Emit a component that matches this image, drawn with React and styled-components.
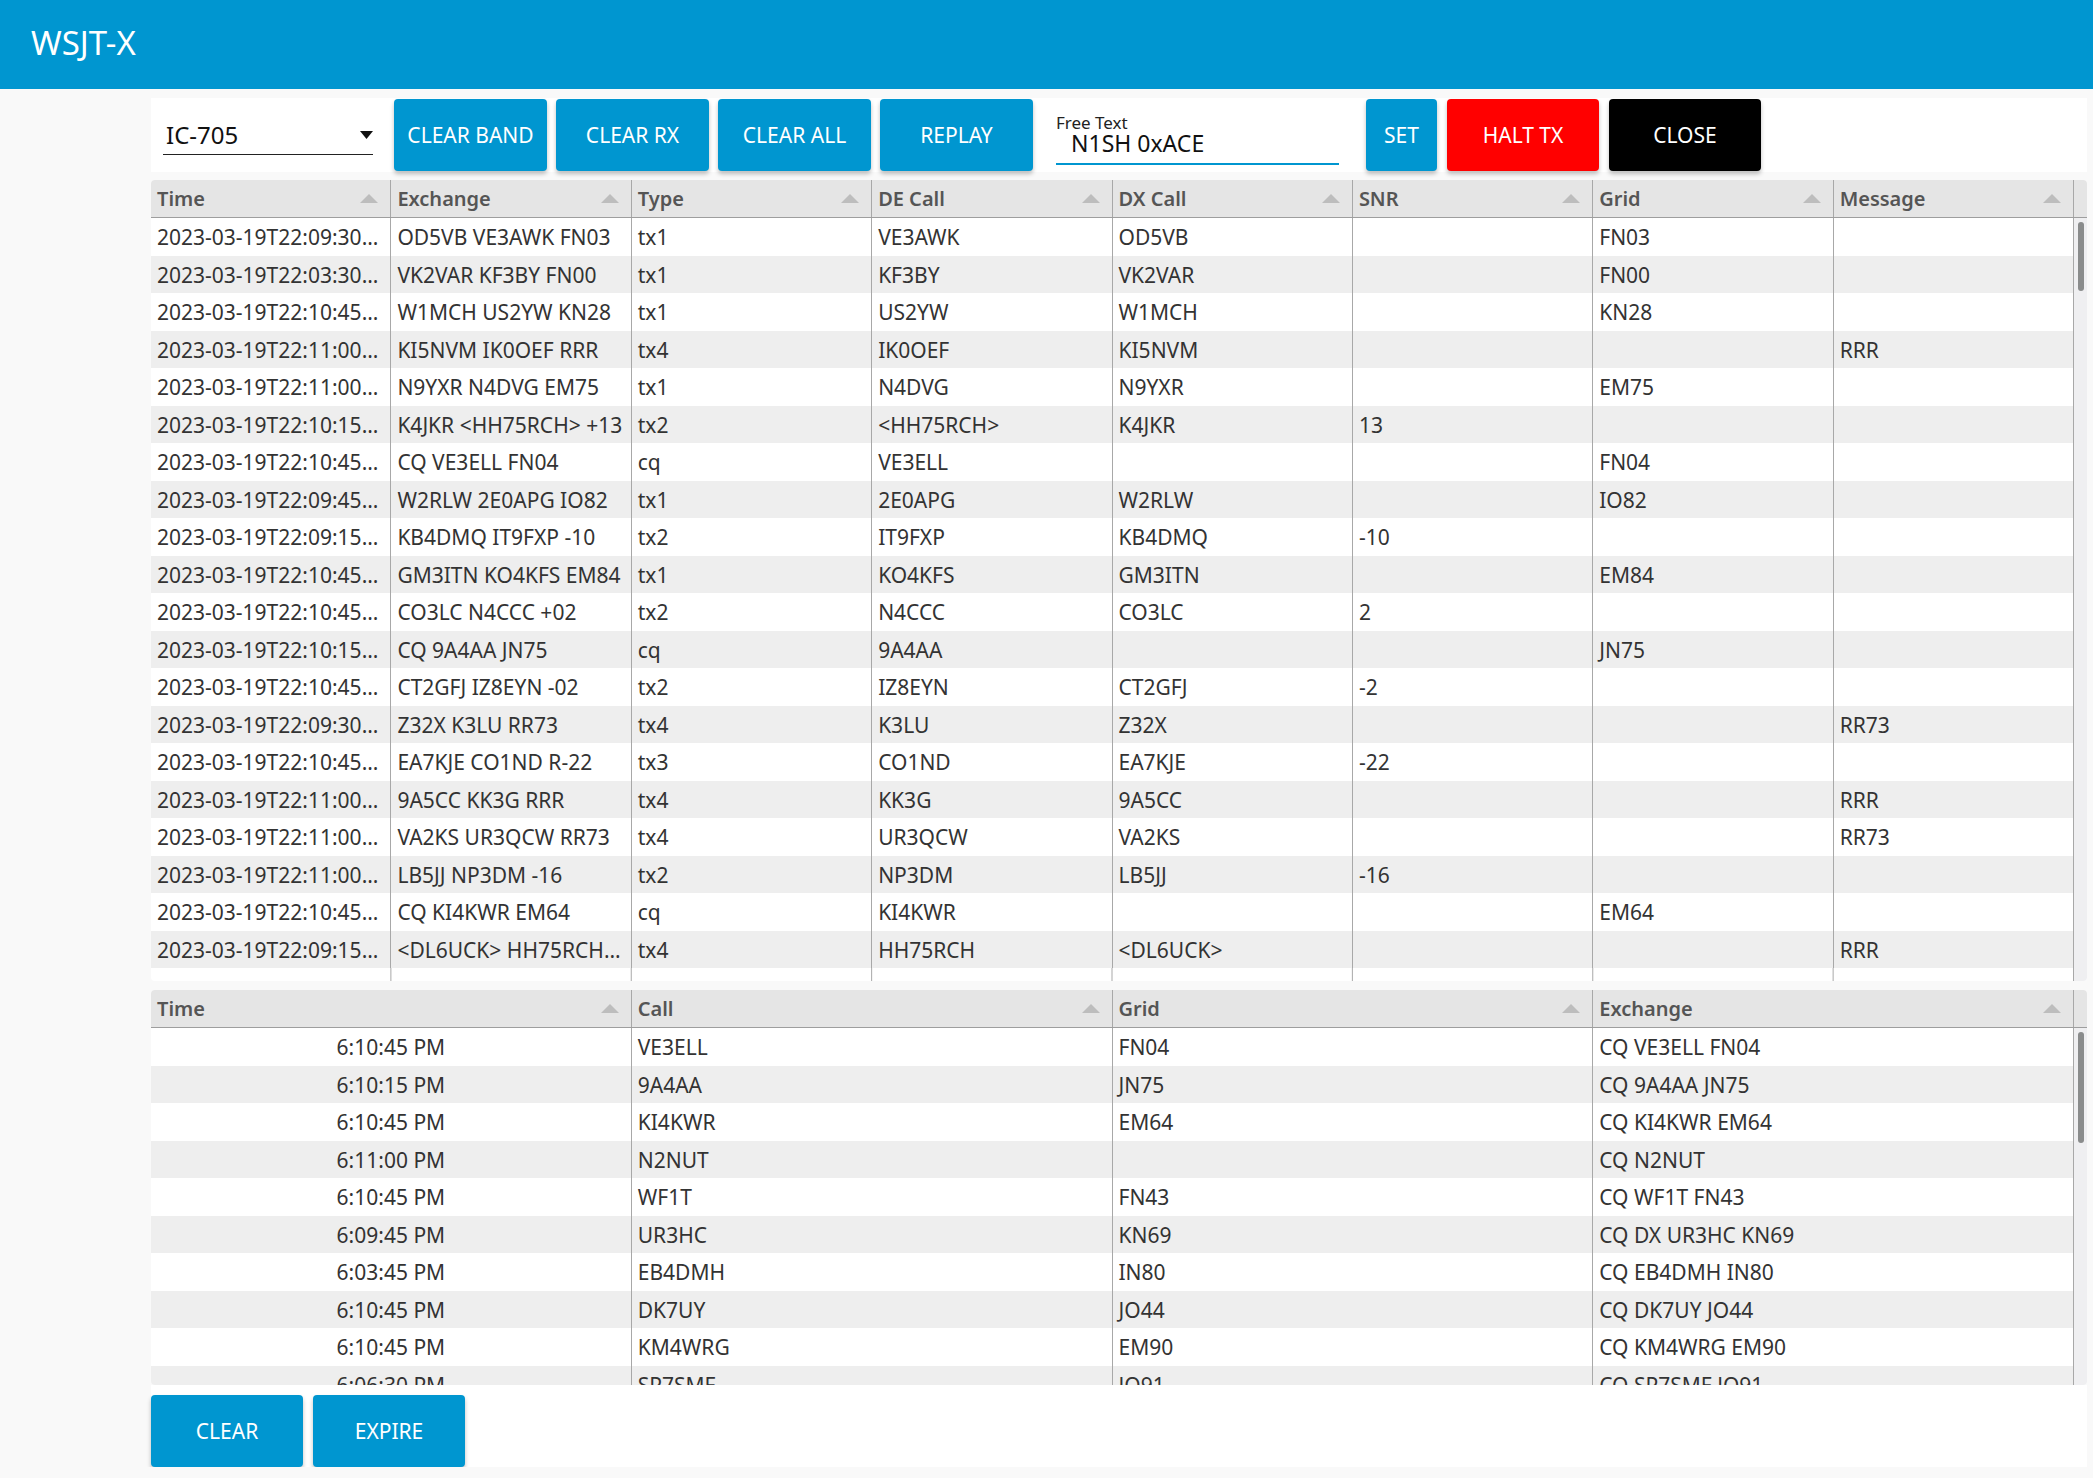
import styled, { createGlobalStyle } from "styled-components";

const GlobalStyle = createGlobalStyle`
  body {
    margin: 0;
    background: #f9f9f9;
    font-family: "Noto Sans", "DejaVu Sans", sans-serif;
    color: #333;
  }
`;

const topRows = [
  ["2023-03-19T22:09:30.000Z", "OD5VB VE3AWK FN03", "tx1", "VE3AWK", "OD5VB", "", "FN03", ""],
  ["2023-03-19T22:03:30.000Z", "VK2VAR KF3BY FN00", "tx1", "KF3BY", "VK2VAR", "", "FN00", ""],
  ["2023-03-19T22:10:45.000Z", "W1MCH US2YW KN28", "tx1", "US2YW", "W1MCH", "", "KN28", ""],
  ["2023-03-19T22:11:00.000Z", "KI5NVM IK0OEF RRR", "tx4", "IK0OEF", "KI5NVM", "", "", "RRR"],
  ["2023-03-19T22:11:00.000Z", "N9YXR N4DVG EM75", "tx1", "N4DVG", "N9YXR", "", "EM75", ""],
  ["2023-03-19T22:10:15.000Z", "K4JKR <HH75RCH> +13", "tx2", "<HH75RCH>", "K4JKR", "13", "", ""],
  ["2023-03-19T22:10:45.000Z", "CQ VE3ELL FN04", "cq", "VE3ELL", "", "", "FN04", ""],
  ["2023-03-19T22:09:45.000Z", "W2RLW 2E0APG IO82", "tx1", "2E0APG", "W2RLW", "", "IO82", ""],
  ["2023-03-19T22:09:15.000Z", "KB4DMQ IT9FXP -10", "tx2", "IT9FXP", "KB4DMQ", "-10", "", ""],
  ["2023-03-19T22:10:45.000Z", "GM3ITN KO4KFS EM84", "tx1", "KO4KFS", "GM3ITN", "", "EM84", ""],
  ["2023-03-19T22:10:45.000Z", "CO3LC N4CCC +02", "tx2", "N4CCC", "CO3LC", "2", "", ""],
  ["2023-03-19T22:10:15.000Z", "CQ 9A4AA JN75", "cq", "9A4AA", "", "", "JN75", ""],
  ["2023-03-19T22:10:45.000Z", "CT2GFJ IZ8EYN -02", "tx2", "IZ8EYN", "CT2GFJ", "-2", "", ""],
  ["2023-03-19T22:09:30.000Z", "Z32X K3LU RR73", "tx4", "K3LU", "Z32X", "", "", "RR73"],
  ["2023-03-19T22:10:45.000Z", "EA7KJE CO1ND R-22", "tx3", "CO1ND", "EA7KJE", "-22", "", ""],
  ["2023-03-19T22:11:00.000Z", "9A5CC KK3G RRR", "tx4", "KK3G", "9A5CC", "", "", "RRR"],
  ["2023-03-19T22:11:00.000Z", "VA2KS UR3QCW RR73", "tx4", "UR3QCW", "VA2KS", "", "", "RR73"],
  ["2023-03-19T22:11:00.000Z", "LB5JJ NP3DM -16", "tx2", "NP3DM", "LB5JJ", "-16", "", ""],
  ["2023-03-19T22:10:45.000Z", "CQ KI4KWR EM64", "cq", "KI4KWR", "", "", "EM64", ""],
  ["2023-03-19T22:09:15.000Z", "<DL6UCK> HH75RCH RRR", "tx4", "HH75RCH", "<DL6UCK>", "", "", "RRR"],
];

const bottomRows = [
  ["6:10:45 PM", "VE3ELL", "FN04", "CQ VE3ELL FN04"],
  ["6:10:15 PM", "9A4AA", "JN75", "CQ 9A4AA JN75"],
  ["6:10:45 PM", "KI4KWR", "EM64", "CQ KI4KWR EM64"],
  ["6:11:00 PM", "N2NUT", "", "CQ N2NUT"],
  ["6:10:45 PM", "WF1T", "FN43", "CQ WF1T FN43"],
  ["6:09:45 PM", "UR3HC", "KN69", "CQ DX UR3HC KN69"],
  ["6:03:45 PM", "EB4DMH", "IN80", "CQ EB4DMH IN80"],
  ["6:10:45 PM", "DK7UY", "JO44", "CQ DK7UY JO44"],
  ["6:10:45 PM", "KM4WRG", "EM90", "CQ KM4WRG EM90"],
  ["6:06:30 PM", "SP7SMF", "JO91", "CQ SP7SMF JO91"],
];

const topCols = ["Time", "Exchange", "Type", "DE Call", "DX Call", "SNR", "Grid", "Message"];
const bottomCols = ["Time", "Call", "Grid", "Exchange"];

function SortArrow() {
  return (
    <svg width="18" height="9" viewBox="0 0 18 9">
      <polygon points="0,9 9,0 18,9" fill="#bdbdbd" />
    </svg>
  );
}

// timestamp column: first cell either centred (short times) or trimmed (ISO stamps)
function DataTable({ cols, rows, height, thumb, firstCol, filler }) {
  return (
    <Table $h={height}>
      <HeadRow $n={cols.length}>
        {cols.map((c) => (
          <HeadCell key={c}>
            <span>{c}</span>
            <SortArrow />
          </HeadCell>
        ))}
        <HeadSpacer />
      </HeadRow>
      <Body>
        <Rows>
          {rows.map((r, i) => (
            <Row key={i} $n={cols.length}>
              {r.map((v, j) => (
                <Cell key={j} $variant={j === 0 ? firstCol : undefined}>
                  {v}
                </Cell>
              ))}
            </Row>
          ))}
          {filler && <Filler $n={cols.length} />}
        </Rows>
        <Track>
          <Thumb $h={thumb} />
        </Track>
      </Body>
    </Table>
  );
}

export default function App() {
  return (
    <>
      <GlobalStyle />
      <AppBar>WSJT-X</AppBar>
      <Main>
        <Toolbar>
          <Select>
            <span>IC-705</span>
            <svg width="13" height="8" viewBox="0 0 13 8">
              <polygon points="0,0 13,0 6.5,8" fill="#111" />
            </svg>
          </Select>
          <ButtonGroup $gap={9} $ml={21}>
            <Button $w={153}>CLEAR BAND</Button>
            <Button $w={153}>CLEAR RX</Button>
            <Button $w={153}>CLEAR ALL</Button>
            <Button $w={153}>REPLAY</Button>
          </ButtonGroup>
          <FreeText>
            <Label>Free Text</Label>
            <Value>N1SH 0xACE</Value>
          </FreeText>
          <ButtonGroup $gap={10} $ml={27}>
            <Button $w={71}>SET</Button>
            <Button $w={152} $bg="#ff0000">HALT TX</Button>
            <Button $w={152} $bg="#000000">CLOSE</Button>
          </ButtonGroup>
        </Toolbar>

        <Spacer $h={8} />
        <DataTable cols={topCols} rows={topRows} height={801} thumb={69} firstCol="stamp" filler />
        <Spacer $h={9} />
        <DataTable cols={bottomCols} rows={bottomRows} height={395} thumb={111} firstCol="center" />

        <Footer>
          <ButtonGroup $gap={10} $ml={0}>
            <Button $w={152}>CLEAR</Button>
            <Button $w={152}>EXPIRE</Button>
          </ButtonGroup>
        </Footer>
      </Main>
    </>
  );
}

const AppBar = styled.header`
  height: 89px;
  box-sizing: border-box;
  background: #0096d0;
  color: #fff;
  display: flex;
  align-items: center;
  padding: 0 0 5px 31px;
  font-size: 33px;
`;

const Main = styled.main`
  margin: 9px 6px 0 151px;
  display: flex;
  flex-direction: column;
`;

const Toolbar = styled.div`
  height: 74px;
  background: #fff;
  display: flex;
  align-items: center;
  padding-left: 12px;
`;

const Select = styled.div`
  width: 210px;
  height: 40px;
  box-sizing: border-box;
  border-bottom: 1px solid #222;
  display: flex;
  align-items: center;
  justify-content: space-between;
  padding-left: 3px;
  font-size: 24px;
  color: #111;
`;

const ButtonGroup = styled.div`
  display: flex;
  gap: ${(p) => p.$gap}px;
  margin-left: ${(p) => p.$ml}px;
`;

const Button = styled.button`
  width: ${(p) => p.$w}px;
  height: 72px;
  border: none;
  border-radius: 4px;
  background: ${(p) => p.$bg || "#0096d0"};
  color: #fff;
  font-family: inherit;
  font-size: 21px;
  box-shadow: 0 3px 4px rgba(0, 0, 0, 0.25);
  padding: 0;
`;

const FreeText = styled.div`
  align-self: flex-start;
  margin-top: 15px;
  margin-left: 23px;
  width: 283px;
  padding-bottom: 10px;
  border-bottom: 2px solid #0096d0;
  display: flex;
  flex-direction: column;
`;

const Label = styled.div`
  font-size: 17px;
  line-height: 20px;
  color: #222;
`;

const Value = styled.div`
  font-size: 23px;
  line-height: 20px;
  color: #111;
  padding-left: 15px;
`;

const Spacer = styled.div`
  height: ${(p) => p.$h}px;
`;

const Table = styled.section`
  height: ${(p) => p.$h}px;
  background: #fff;
  border-radius: 4px;
  overflow: hidden;
  display: flex;
  flex-direction: column;
`;

const HeadRow = styled.div`
  height: 38px;
  box-sizing: border-box;
  display: grid;
  grid-template-columns: repeat(${(p) => p.$n}, 1fr) 13px;
  background: #e5e5e5;
  border-bottom: 1px solid #9e9e9e;
`;

const HeadCell = styled.div`
  display: flex;
  align-items: center;
  justify-content: space-between;
  padding: 0 12px 0 6px;
  border-right: 1px solid #a8a8a8;
  font-size: 20px;
  font-weight: 600;
  color: #555;
  min-width: 0;
`;

const HeadSpacer = styled.div``;

const Body = styled.div`
  flex: 1;
  display: flex;
  min-height: 0;
`;

const Rows = styled.div`
  flex: 1;
  display: flex;
  flex-direction: column;
  overflow: hidden;
`;

const Row = styled.div`
  flex: none;
  height: 37.5px;
  display: grid;
  grid-template-columns: repeat(${(p) => p.$n}, 1fr);
  background: #fff;
  &:nth-child(even) {
    background: #eeeeee;
  }
`;

const Cell = styled.div`
  min-width: 0;
  padding: 2px ${(p) => (p.$variant === "stamp" ? 10 : 6)}px 0 6px;
  border-right: 1px solid #a8a8a8;
  font-size: 21px;
  line-height: 35.5px;
  white-space: nowrap;
  overflow: hidden;
  text-overflow: ellipsis;
  text-align: ${(p) => (p.$variant === "center" ? "center" : "left")};
  color: #333;
`;

const Filler = styled.div`
  flex: 1;
  background-image: linear-gradient(to left, #a8a8a8 1px, transparent 1px);
  background-size: calc(100% / ${(p) => p.$n}) 100%;
`;

const Track = styled.div`
  width: 13px;
  box-sizing: border-box;
  padding: 4px 3px 0 4px;
  background: #efeff1;
`;

const Thumb = styled.div`
  height: ${(p) => p.$h}px;
  border-radius: 3px;
  background: #8a8c8c;
`;

const Footer = styled.div`
  height: 82px;
  box-sizing: border-box;
  padding-top: 10px;
  background: #fff;
`;
